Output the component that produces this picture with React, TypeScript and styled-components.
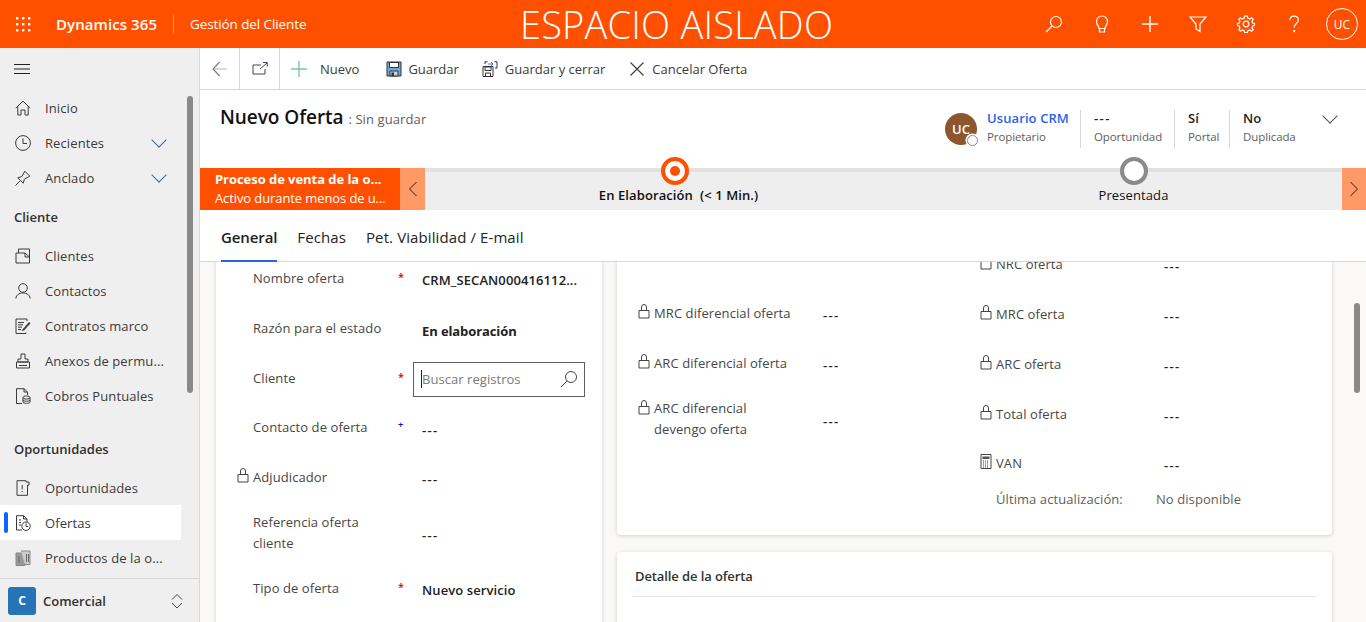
import React from 'react';
import styled, { createGlobalStyle } from 'styled-components';

const GlobalStyle = createGlobalStyle`
  html, body { margin: 0; padding: 0; height: 100%; overflow: hidden; }
  body { font-family: "Open Sans", "Noto Sans", "Liberation Sans", sans-serif; color: #333; }
  #root { height: 100%; }
  * { box-sizing: border-box; }
`;

const Svg = styled.svg`
  display: block;
  flex: none;
  fill: none;
  stroke: currentColor;
  stroke-width: 1;
`;

type IconProps = { size?: number; children: React.ReactNode };
const Ico = ({ size = 16, children }: IconProps) => (
  <Svg width={size} height={size} viewBox={`0 0 ${size} ${size}`}>{children}</Svg>
);

const Waffle = () => (
  <Ico>
    {[1, 7, 13].flatMap((y) => [1, 7, 13].map((x) => (
      <rect key={`${x}-${y}`} x={x} y={y} width="2.4" height="2.4" fill="#fff" stroke="none" />
    )))}
  </Ico>
);
const Lens = () => (
  <Ico size={18}>
    <circle cx="11" cy="7" r="5.5" strokeWidth="1.2" /><path d="M7 11 L1 17" strokeWidth="1.2" />
  </Ico>
);
const Bulb = () => (
  <Ico size={18}>
    <path d="M6 13.5 C6 11 3.5 10 3.5 6.5 A5.5 5.5 0 0 1 14.5 6.5 C14.5 10 12 11 12 13.5 Z M6.5 13.5 V17 H11.5 V13.5" strokeWidth="1.2" />
  </Ico>
);
const Plus = () => (
  <Ico size={18}><path d="M9 1 V17 M1 9 H17" strokeWidth="1.4" /></Ico>
);
const Funnel = () => (
  <Ico size={18}><path d="M1 2 H17 L11 9 V16.5 L7 14 V9 Z" strokeWidth="1.2" /></Ico>
);
const Gear = () => (
  <Ico size={18}>
    <circle cx="9" cy="9" r="2.8" strokeWidth="1.2" />
    <path strokeWidth="1.2" d="M7.6 1 H10.4 L10.9 3.2 L12.8 4 L14.7 2.8 L16.2 4.4 L15 6.2 L15.8 8 L17.5 8.5 V10.5 L15.8 11 L15 12.9 L16.2 14.7 L14.6 16.2 L12.8 15 L10.9 15.8 L10.4 17.5 H7.6 L7.1 15.8 L5.2 15 L3.4 16.2 L1.8 14.7 L3 12.9 L2.2 11 L0.5 10.5 V8.5 L2.2 8 L3 6.2 L1.8 4.4 L3.3 2.8 L5.2 4 L7.1 3.2 Z" />
  </Ico>
);
const Help = () => (
  <Ico size={18}>
    <path d="M4.8 5.2 C4.8 -0.2 13.4 -0.2 13.4 5 C13.4 8.2 9.2 8.4 9.2 12.6" strokeWidth="1.2" />
    <circle cx="9.2" cy="16" r=".8" fill="currentColor" />
  </Ico>
);
const Burger = () => (
  <Ico><path d="M0 3.5 H16 M0 8 H16 M0 12.5 H16" /></Ico>
);
const HomeIcon = () => (
  <Ico><path d="M.8 8 L8 1.2 L15.2 8 M2.8 6.5 V15 H6 V10 H10 V15 H13.2 V6.5" /></Ico>
);
const ClockIcon = () => (
  <Ico><circle cx="8" cy="8" r="7.4" /><path d="M8 3.5 V8.5 H12" /></Ico>
);
const PinIcon = () => (
  <Ico><path d="M.5 15.5 L5.2 10.8 M2.8 7.8 L6.8 6.6 L9.8 1.2 L14.8 6.2 L9.4 9.2 L8.2 13.2 Z" /></Ico>
);
const Chevron = styled.span`
  display: block;
  width: 10px;
  height: 10px;
  border-right: 1.2px solid currentColor;
  border-bottom: 1.2px solid currentColor;
  transform: rotate(45deg) scale(1.1);
`;
const AccountsIcon = () => (
  <Ico><path d="M1 5 H10 L14.5 9 V15 H1 Z M3.5 5 L3.5 1 H14.5 V9 M10 5 V9 H14.5" /></Ico>
);
const PersonIcon = () => (
  <Ico><circle cx="8" cy="5" r="4.3" /><path d="M.8 15.5 C1.2 8 14.8 8 15.2 15.5" /></Ico>
);
const ContractIcon = () => (
  <Ico>
    <path d="M11 14.5 V15.5 H1 V1 H12 V3 M3 4.5 H9 M3 6.8 H8 M3 9.1 H7 M3 11.5 H6" />
    <path d="M7.5 11.5 L14 4 L15.5 5.3 L9 12.5 L7 13 Z" fill="currentColor" stroke="none" />
  </Ico>
);
const StampIcon = () => (
  <Ico>
    <path d="M6 1 H10 V6 H13 V9 H3 V6 H6 Z M1.5 9 H14.5 V15 H1.5 Z M4 12.5 H12" />
  </Ico>
);
const BillIcon = () => (
  <Ico>
    <path d="M7 15.5 H1.5 V.7 H9 L12.5 4 V7 M9 .7 V4 H12.5" />
    <ellipse cx="11.5" cy="9.5" rx="3.5" ry="1.6" /><path d="M8 9.5 V14 C8 15.8 15 15.8 15 14 V9.5 M8 12 C8 13.6 15 13.6 15 12" />
  </Ico>
);
const OpportunityIcon = () => (
  <Ico><path d="M2 .7 H11 V2 H14 V5 H12.5 V15.3 H2 Z M7.2 5 V9.5 M7.2 11 V12" /></Ico>
);
const QuoteIcon = () => (
  <Ico>
    <path d="M7 15 H1.5 V.7 H8.5 L12 4 V7 M8.5 .7 V4 H12 M4 5 H6 M4 7.5 H6 M4 10 H6" />
    <circle cx="11" cy="11.2" r="4.2" /><path d="M11 8.5 V11.5 H13.2" />
  </Ico>
);
const ProductIcon = () => (
  <Ico>
    <path d="M1 3 H10 V15.5 H1 Z" fill="#999" stroke="#888" />
    <path d="M6 1 H15 V14.5 H10" stroke="#888" fill="#ccc" />
    <path d="M11.5 4 V12 M13.5 4 V12 M4 6 V13" stroke="#666" />
  </Ico>
);
const BackIcon = () => (
  <Ico><path d="M1 8 H15" stroke="#c4c4c4" strokeWidth="1.3" /><path d="M7.6 1 L1 8 L7.6 15" stroke="#777" strokeWidth="1.1" /></Ico>
);
const PopIcon = () => (
  <Ico><path d="M9 4 H1 V13 H13 V8 M8 8 L15 2 M11 1.5 H15.3 V5.5" /></Ico>
);
const GreenPlus = () => (
  <Ico><path d="M8 0 V16 M0 8 H16" stroke="#7fc89b" strokeWidth="1.4" /></Ico>
);
const SaveIcon = () => (
  <Ico>
    <path d="M1 1 H15 V15 H1 Z" stroke="#333" fill="#6fa6dc" />
    <path d="M3.5 1.5 H12.5 V6.5 H3.5 Z" fill="#fff" stroke="#333" />
    <path d="M4 10 H12 V15 H4 Z" fill="#d0d0d0" stroke="#333" />
    <rect x="5.5" y="11.5" width="2.5" height="3.5" fill="#333" stroke="none" />
  </Ico>
);
const SaveCloseIcon = () => (
  <Ico>
    <path d="M1 5.5 H11 V15.5 H1 Z" stroke="#333" />
    <path d="M3 6 H9 V9.5 H3 Z M3.5 12 H8.5 V15.5 H3.5 Z" stroke="#333" />
    <path d="M3 3 V.8 H5.5 M12.5 .8 H15 V7 H13" stroke="#333" />
    <path d="M6 3 H11 M9 1.2 L11 3 L9 4.8" stroke="#2b7cd3" />
  </Ico>
);
const CloseIcon = () => (
  <Ico><path d="M1.5 1.5 L14.5 14.5 M14.5 1.5 L1.5 14.5" strokeWidth="1.1" /></Ico>
);
const LockIcon = () => (
  <Svg width={12} height={15} viewBox="0 0 12 15">
    <path d="M1 6.5 H11 V14 H1 Z M3.5 6.5 V3 A2.5 2.5 0 0 1 8.5 3 V6.5" />
  </Svg>
);
const CalcIcon = () => (
  <Svg width={12} height={15} viewBox="0 0 12 15">
    <path d="M1 .5 H11 V14.5 H1 Z" />
    <path d="M2.5 2.5 H9.5 V5 H2.5 Z" fill="#555" stroke="none" />
    <path d="M3 7 H9 M3 9 H9 M3 11 H9 M3 13 H9" strokeDasharray="1 1" />
  </Svg>
);
const SearchField = () => (
  <Ico size={18}><circle cx="11" cy="7" r="5.5" /><path d="M7 11 L1 17" /></Ico>
);

/* ---- top bar ---- */
const TopBar = styled.header`
  height: 48px;
  background: #ff5000;
  color: #fff;
  display: flex;
  align-items: center;
`;
const WaffleBox = styled.div`
  width: 48px;
  padding-left: 15px;
`;
const Brand = styled.div`
  margin-left: 8px;
  font-size: 15px;
  font-weight: 600;
  width: 117px;
  letter-spacing: 0.08px;
`;
const BarDivider = styled.div`
  width: 1px;
  height: 20px;
  background: #ff9966;
`;
const AppName = styled.div`
  margin-left: 16px;
  font-size: 13.5px;
  width: 330px;
  letter-spacing: -0.1px;
`;
const Banner = styled.div`
  font-size: 38px;
  letter-spacing: 0.2px;
  font-weight: 300;
  white-space: nowrap;
  flex: 1;
  line-height: 48px;
`;
const BarButton = styled.div`
  width: 48px;
  height: 48px;
  display: flex;
  align-items: center;
  justify-content: center;
`;
const UserCircle = styled.div`
  width: 32px;
  height: 32px;
  margin: 0 8px;
  border: 1px solid #fff;
  border-radius: 50%;
  font-size: 12px;
  display: flex;
  align-items: center;
  justify-content: center;
`;

/* ---- shell ---- */
const Shell = styled.div`
  display: flex;
  height: 574px;
`;
const Sidebar = styled.nav`
  position: relative;
  width: 200px;
  flex: none;
  background: #efefef;
  border-right: 1px solid #d8d8d8;
  display: flex;
  flex-direction: column;
`;
const NavList = styled.div`
  flex: 1;
  overflow: hidden;
`;
const BurgerRow = styled.div`
  height: 42px;
  padding-left: 14px;
  display: flex;
  align-items: center;
  color: #222;
`;
const NavItem = styled.div<{ $active?: boolean }>`
  position: relative;
  width: 181px;
  height: 35px;
  padding-left: 15px;
  display: flex;
  align-items: center;
  gap: 14px;
  font-size: 13px;
  letter-spacing: 0.1px;
  white-space: nowrap;
  color: #3b3a39;
  background: ${(p) => (p.$active ? '#fff' : 'transparent')};
  ${(p) => p.$active && `
    &::before {
      content: '';
      position: absolute;
      left: 4px;
      top: 7px;
      width: 4px;
      height: 21px;
      border-radius: 2px;
      background: #0f62fe;
    }
  `}
`;
const NavChevron = styled.span`
  margin-left: auto;
  margin-right: 17px;
  color: #3f6a97;
  transform: translateY(-3px);
`;
const NavHeading = styled.div<{ $top: number }>`
  margin: ${(p) => p.$top}px 0 4px;
  height: 35px;
  padding-left: 14px;
  display: flex;
  align-items: center;
  font-size: 13px;
  font-weight: 600;
  color: #323130;
`;
const NavScroll = styled.div`
  position: absolute;
  left: 187px;
  top: 48px;
  width: 6px;
  height: 297px;
  border-radius: 3px;
  background: #8a8a8a;
`;
const AreaSwitch = styled.div`
  height: 44px;
  margin-right: -1px;
  border-top: 1px solid #d8d8d8;
  padding: 0 15px 0 8px;
  display: flex;
  align-items: center;
  gap: 7px;
  font-size: 13px;
  font-weight: 600;
  color: #323130;
`;
const AreaBadge = styled.div`
  width: 28px;
  height: 28px;
  border-radius: 3px;
  background: #2673b5;
  color: #fff;
  font-size: 12px;
  font-weight: 700;
  display: flex;
  align-items: center;
  justify-content: center;
`;
const AreaArrows = styled.div`
  margin-left: auto;
  color: #444;
`;

/* ---- main ---- */
const Main = styled.main`
  flex: 1;
  min-width: 0;
  display: flex;
  flex-direction: column;
`;
const Toolbar = styled.div`
  height: 42px;
  flex: none;
  border-bottom: 1px solid #d8d8d8;
  display: flex;
  align-items: stretch;
`;
const ToolSquare = styled.div<{ $w: number }>`
  width: ${(p) => p.$w}px;
  border-right: 1px solid #d8d8d8;
  display: flex;
  align-items: center;
  justify-content: center;
  color: #444;
`;
const ToolButton = styled.div<{ $left: number; $gap: number }>`
  display: flex;
  align-items: center;
  margin-left: ${(p) => p.$left}px;
  gap: ${(p) => p.$gap}px;
  font-size: 13px;
  color: #3b3a39;
`;
const TitleBlock = styled.div`
  height: 78px;
  flex: none;
  display: flex;
  padding: 16px 0 0 20px;
`;
const TitleText = styled.div`
  font-size: 19px;
  font-weight: 600;
  letter-spacing: -0.05px;
  line-height: 22px;
  color: #111;
  span {
    font-size: 13px;
    font-weight: 400;
    letter-spacing: 0.1px;
    color: #605e5c;
  }
`;
const HeaderFields = styled.div`
  margin-left: auto;
  padding: 4px 31px 0 0;
  display: flex;
  align-items: flex-start;
`;
const OwnerAvatar = styled.div`
  position: relative;
  width: 32px;
  height: 32px;
  margin: 3px 10px 0 0;
  border-radius: 50%;
  background: #8e562e;
  color: #fff;
  font-size: 13px;
  font-weight: 600;
  display: flex;
  align-items: center;
  justify-content: center;
  &::after {
    content: '';
    position: absolute;
    right: -1px;
    bottom: -1px;
    width: 9px;
    height: 9px;
    border-radius: 50%;
    background: #fff;
    border: 1.5px solid #8a8a8a;
    box-shadow: 0 0 0 1.5px #fff;
  }
`;
const HeaderField = styled.div<{ $w: number; $pad?: boolean; $line?: boolean }>`
  width: ${(p) => p.$w}px;
  height: 38px;
  padding-left: ${(p) => (p.$pad ? 13 : 0)}px;
  border-right: ${(p) => (p.$line ? '1px solid #d8d8d8' : 'none')};
  display: flex;
  flex-direction: column;
`;
const HeaderValue = styled.div<{ $link?: boolean; $dash?: boolean }>`
  font-size: 13px;
  font-weight: 600;
  line-height: 17px;
  letter-spacing: ${(p) => (p.$dash ? '1.4px' : '0.1px')};
  color: ${(p) => (p.$link ? '#2b5fe8' : '#222')};
`;
const HeaderCaption = styled.div`
  font-size: 11.5px;
  letter-spacing: -0.1px;
  line-height: 20px;
  color: #605e5c;
`;
const HeaderChevron = styled.div`
  margin: 1px 0 0 27px;
  color: #555;
`;

/* ---- business process flow ---- */
const Process = styled.div`
  position: relative;
  height: 42px;
  flex: none;
  display: flex;
  background: #eee;
`;
const ProcessTitle = styled.div`
  width: 200px;
  flex: none;
  background: #ff5000;
  color: #fff;
  padding: 2px 0 0 15px;
  font-size: 13px;
  letter-spacing: -0.1px;
  line-height: 19px;
  white-space: nowrap;
  strong { display: block; font-weight: 700; letter-spacing: -0.05px; }
`;
const ProcessNudge = styled.div`
  width: 25px;
  flex: none;
  background: #ff9966;
  color: #222;
  display: flex;
  align-items: center;
  justify-content: center;
`;
const ProcessNudgeRight = styled(ProcessNudge)`
  position: absolute;
  right: 0;
  top: 0;
  bottom: 0;
  width: 24px;
`;
const StageTrack = styled.div`
  flex: 1;
  min-width: 0;
  display: grid;
  grid-template-columns: 459px 459px;
  padding-left: 20px;
  border-top: 4px solid #e1e1e1;
  background: linear-gradient(#8a8a8a, #8a8a8a) no-repeat -20px -4px / 729px 4px border-box;
`;
const Stage = styled.div<{ $on?: boolean }>`
  position: relative;
  text-align: center;
  padding: 15px 0 0 ${(p) => (p.$on ? 8 : 0)}px;
  font-size: 13px;
  letter-spacing: 0.1px;
  line-height: 17px;
  color: #111;
  white-space: pre;
  font-weight: ${(p) => (p.$on ? 600 : 400)};
`;
const StageDot = styled.div<{ $on?: boolean }>`
  position: absolute;
  left: 50%;
  top: -15px;
  width: 28px;
  height: 28px;
  margin-left: -14px;
  border-radius: 50%;
  background: #fff;
  border: 4px solid ${(p) => (p.$on ? '#ff5000' : '#8a8a8a')};
  ${(p) => p.$on && `
    &::after {
      content: '';
      position: absolute;
      left: 5px;
      top: 5px;
      width: 10px;
      height: 10px;
      border-radius: 50%;
      background: #ff5000;
    }
  `}
`;

/* ---- tabs ---- */
const Tabs = styled.div`
  height: 52px;
  flex: none;
  padding-left: 21px;
  display: flex;
  gap: 20px;
  border-bottom: 1px solid #d8d8d8;
`;
const Tab = styled.div<{ $on?: boolean }>`
  height: 52px;
  padding-top: 16px;
  font-size: 15px;
  letter-spacing: ${(p) => (p.$on ? '-0.1px' : '0.1px')};
  line-height: 22px;
  color: #222;
  font-weight: ${(p) => (p.$on ? 600 : 400)};
  border-bottom: 2px solid ${(p) => (p.$on ? '#2266e3' : 'transparent')};
`;

/* ---- form ---- */
const Pane = styled.div`
  position: relative;
  flex: 1;
  min-height: 0;
  overflow: hidden;
  background: #faf9f8;
`;
const PaneScroll = styled.div`
  position: absolute;
  right: 6px;
  top: 41px;
  width: 6px;
  height: 90px;
  border-radius: 3px;
  background: #8a8a8a;
`;
const Columns = styled.div`
  margin-top: -40px;
  padding-left: 16px;
  display: flex;
  gap: 15px;
  align-items: flex-start;
`;
const Card = styled.section`
  background: #fff;
  border-radius: 4px;
  box-shadow: 0 1px 4px rgba(0, 0, 0, 0.16);
`;
const LeftCard = styled(Card)`
  width: 386px;
  height: 640px;
  padding: 32px 0 0 21px;
`;
const RightStack = styled.div`
  width: 715px;
  display: flex;
  flex-direction: column;
  gap: 17px;
`;
const SummaryCard = styled(Card)`
  padding: 18px 0 25px 21px;
  display: grid;
  grid-template-columns: 342px 1fr;
`;
const SummaryColumn = styled.div<{ $top?: number }>`
  padding-top: ${(p) => p.$top || 0}px;
`;
const DetailCard = styled(Card)`
  height: 200px;
  padding: 0 16px 0 15px;
`;
const DetailTitle = styled.h3`
  margin: 0;
  height: 45px;
  padding: 14px 0 0 3px;
  border-bottom: 1px solid #e6e6e6;
  font-size: 13px;
  font-weight: 600;
  letter-spacing: -0.1px;
  line-height: 20px;
  color: #323130;
`;
const Row = styled.div<{ $h: number; $label: number }>`
  height: ${(p) => p.$h}px;
  display: grid;
  grid-template-columns: 16px ${(p) => p.$label}px 1fr;
  align-items: center;
`;
const Gutter = styled.div<{ $first?: boolean }>`
  color: #444;
  align-self: ${(p) => (p.$first ? 'start' : 'center')};
  margin-top: ${(p) => (p.$first ? '11px' : '-5px')};
`;
const Label = styled.div`
  font-size: 13px;
  letter-spacing: 0.08px;
  line-height: 21px;
  color: #484644;
  position: relative;
  top: -1px;
`;
const Mark = styled.span<{ $blue?: boolean }>`
  position: absolute;
  left: 145px;
  top: ${(p) => (p.$blue ? -3 : -2)}px;
  font-size: ${(p) => (p.$blue ? 9 : 11)}px;
  font-weight: 600;
  color: ${(p) => (p.$blue ? '#0000ff' : '#e00000')};
`;
const Value = styled.div<{ $weight?: 'semi' | 'bold'; $dash?: boolean }>`
  font-size: 13px;
  letter-spacing: ${(p) => (p.$dash ? '1.3px' : p.$weight === 'bold' ? '-0.1px' : '0.1px')};
  line-height: 21px;
  padding-top: ${(p) => (p.$weight === 'bold' ? 4 : 3)}px;
  white-space: nowrap;
  color: #222;
  font-weight: ${(p) => (p.$weight === 'bold' ? 700 : p.$weight === 'semi' ? 600 : p.$dash ? 600 : 400)};
`;
const LookupBox = styled.div`
  width: 172px;
  height: 35px;
  margin-left: -9px;
  border: 1px solid #605e5c;
  padding: 0 6px 0 7px;
  display: flex;
  align-items: center;
  justify-content: space-between;
  color: #444;
  background: #fff;
`;
const LookupText = styled.span`
  font-size: 13px;
  letter-spacing: 0.05px;
  color: #7a7a7a;
  border-left: 1px solid #222;
  line-height: 18px;
`;
const Muted = styled.div`
  font-size: 13px;
  letter-spacing: 0.08px;
  color: #605e5c;
`;
const UpdatedRow = styled.div`
  height: 22px;
  padding-left: 16px;
  display: grid;
  grid-template-columns: 160px 1fr;
  align-items: center;
`;

type FieldProps = {
  label: React.ReactNode;
  h?: number;
  w: number;
  icon?: React.ReactNode;
  iconFirst?: boolean;
  mark?: 'req' | 'rec';
  children: React.ReactNode;
};
const Field = ({ label, h = 50, w, icon, iconFirst, mark, children }: FieldProps) => (
  <Row $h={h} $label={w}>
    <Gutter $first={iconFirst}>{icon}</Gutter>
    <Label>
      {label}
      {mark === 'req' && <Mark>*</Mark>}
      {mark === 'rec' && <Mark $blue>+</Mark>}
    </Label>
    {children}
  </Row>
);

const navTop = [
  { icon: <HomeIcon />, text: 'Inicio' },
  { icon: <ClockIcon />, text: 'Recientes', more: true },
  { icon: <PinIcon />, text: 'Anclado', more: true },
];
const navClient = [
  { icon: <AccountsIcon />, text: 'Clientes' },
  { icon: <PersonIcon />, text: 'Contactos' },
  { icon: <ContractIcon />, text: 'Contratos marco' },
  { icon: <StampIcon />, text: 'Anexos de permu...' },
  { icon: <BillIcon />, text: 'Cobros Puntuales' },
];
const navSales = [
  { icon: <OpportunityIcon />, text: 'Oportunidades' },
  { icon: <QuoteIcon />, text: 'Ofertas', active: true },
  { icon: <ProductIcon />, text: 'Productos de la o...' },
];

export default function App() {
  return (
    <>
      <GlobalStyle />
      <TopBar>
        <WaffleBox><Waffle /></WaffleBox>
        <Brand>Dynamics 365</Brand>
        <BarDivider />
        <AppName>Gestión del Cliente</AppName>
        <Banner>ESPACIO AISLADO</Banner>
        <BarButton><Lens /></BarButton>
        <BarButton><Bulb /></BarButton>
        <BarButton><Plus /></BarButton>
        <BarButton><Funnel /></BarButton>
        <BarButton><Gear /></BarButton>
        <BarButton><Help /></BarButton>
        <UserCircle>UC</UserCircle>
      </TopBar>
      <Shell>
        <Sidebar>
          <NavList>
            <BurgerRow><Burger /></BurgerRow>
            {navTop.map((n) => (
              <NavItem key={n.text}>
                {n.icon}{n.text}
                {n.more && <NavChevron><Chevron /></NavChevron>}
              </NavItem>
            ))}
            <NavHeading $top={4}>Cliente</NavHeading>
            {navClient.map((n) => <NavItem key={n.text}>{n.icon}{n.text}</NavItem>)}
            <NavHeading $top={18}>Oportunidades</NavHeading>
            {navSales.map((n) => <NavItem key={n.text} $active={n.active}>{n.icon}{n.text}</NavItem>)}
          </NavList>
          <NavScroll />
          <AreaSwitch>
            <AreaBadge>C</AreaBadge>
            Comercial
            <AreaArrows>
              <Ico>
                <path d="M3 6.5 L8 1.5 L13 6.5 M3 10 L8 15 L13 10" />
              </Ico>
            </AreaArrows>
          </AreaSwitch>
        </Sidebar>
        <Main>
          <Toolbar>
            <ToolSquare $w={40}><BackIcon /></ToolSquare>
            <ToolSquare $w={40}><PopIcon /></ToolSquare>
            <ToolButton $left={11} $gap={13}><GreenPlus />Nuevo</ToolButton>
            <ToolButton $left={27} $gap={6}><SaveIcon />Guardar</ToolButton>
            <ToolButton $left={23} $gap={7}><SaveCloseIcon />Guardar y cerrar</ToolButton>
            <ToolButton $left={24} $gap={7}><CloseIcon />Cancelar Oferta</ToolButton>
          </Toolbar>
          <TitleBlock>
            <TitleText>Nuevo Oferta <span>: Sin guardar</span></TitleText>
            <HeaderFields>
              <OwnerAvatar>UC</OwnerAvatar>
              <HeaderField $w={94} $line>
                <HeaderValue $link>Usuario CRM</HeaderValue>
                <HeaderCaption>Propietario</HeaderCaption>
              </HeaderField>
              <HeaderField $w={94} $pad $line>
                <HeaderValue $dash>---</HeaderValue>
                <HeaderCaption>Oportunidad</HeaderCaption>
              </HeaderField>
              <HeaderField $w={55} $pad $line>
                <HeaderValue>Sí</HeaderValue>
                <HeaderCaption>Portal</HeaderCaption>
              </HeaderField>
              <HeaderField $w={68} $pad>
                <HeaderValue>No</HeaderValue>
                <HeaderCaption>Duplicada</HeaderCaption>
              </HeaderField>
              <HeaderChevron><Chevron /></HeaderChevron>
            </HeaderFields>
          </TitleBlock>
          <Process>
            <ProcessTitle>
              <strong>Proceso de venta de la o...</strong>
              Activo durante menos de u...
            </ProcessTitle>
            <ProcessNudge>
              <Ico>
                <path d="M11.5 1 L4.5 8 L11.5 15" />
              </Ico>
            </ProcessNudge>
            <StageTrack>
              <Stage $on>
                <StageDot $on />
                {'En Elaboración  (< 1 Min.)'}
              </Stage>
              <Stage>
                <StageDot />
                Presentada
              </Stage>
            </StageTrack>
            <ProcessNudgeRight>
              <Ico>
                <path d="M4.5 1 L11.5 8 L4.5 15" />
              </Ico>
            </ProcessNudgeRight>
          </Process>
          <Tabs>
            <Tab $on>General</Tab>
            <Tab>Fechas</Tab>
            <Tab>Pet. Viabilidad / E-mail</Tab>
          </Tabs>
          <Pane>
            <Columns>
              <LeftCard>
                <Field w={169} label="Nombre oferta" mark="req"><Value $weight="semi">CRM_SECAN000416112...</Value></Field>
                <Field w={169} label="Razón para el estado"><Value $weight="bold">En elaboración</Value></Field>
                <Field w={169} label="Cliente" mark="req">
                  <LookupBox>
                    <LookupText>Buscar registros</LookupText>
                    <SearchField />
                  </LookupBox>
                </Field>
                <Field w={169} h={49} label="Contacto de oferta" mark="rec"><Value $dash>---</Value></Field>
                <Field w={169} label="Adjudicador" icon={<LockIcon />}><Value $dash>---</Value></Field>
                <Field w={169} h={62} label={<>Referencia oferta<br />cliente</>}><Value $dash>---</Value></Field>
                <Field w={169} h={48} label="Tipo de oferta" mark="req"><Value $weight="semi">Nuevo servicio</Value></Field>
              </LeftCard>
              <RightStack>
                <SummaryCard>
                  <SummaryColumn $top={49}>
                    <Field w={169} label="MRC diferencial oferta" icon={<LockIcon />}><Value $dash>---</Value></Field>
                    <Field w={169} label="ARC diferencial oferta" icon={<LockIcon />}><Value $dash>---</Value></Field>
                    <Field w={169} h={62} label={<>ARC diferencial<br />devengo oferta</>} icon={<LockIcon />} iconFirst><Value $dash>---</Value></Field>
                  </SummaryColumn>
                  <SummaryColumn>
                    <Field w={168} label="NRC oferta" icon={<LockIcon />}><Value $dash>---</Value></Field>
                    <Field w={168} label="MRC oferta" icon={<LockIcon />}><Value $dash>---</Value></Field>
                    <Field w={168} label="ARC oferta" icon={<LockIcon />}><Value $dash>---</Value></Field>
                    <Field w={168} label="Total oferta" icon={<LockIcon />}><Value $dash>---</Value></Field>
                    <Field w={168} h={48} label="VAN" icon={<CalcIcon />}><Value $dash>---</Value></Field>
                    <UpdatedRow>
                      <Muted>Última actualización:</Muted>
                      <Muted>No disponible</Muted>
                    </UpdatedRow>
                  </SummaryColumn>
                </SummaryCard>
                <DetailCard>
                  <DetailTitle>Detalle de la oferta</DetailTitle>
                </DetailCard>
              </RightStack>
            </Columns>
            <PaneScroll />
          </Pane>
        </Main>
      </Shell>
    </>
  );
}
